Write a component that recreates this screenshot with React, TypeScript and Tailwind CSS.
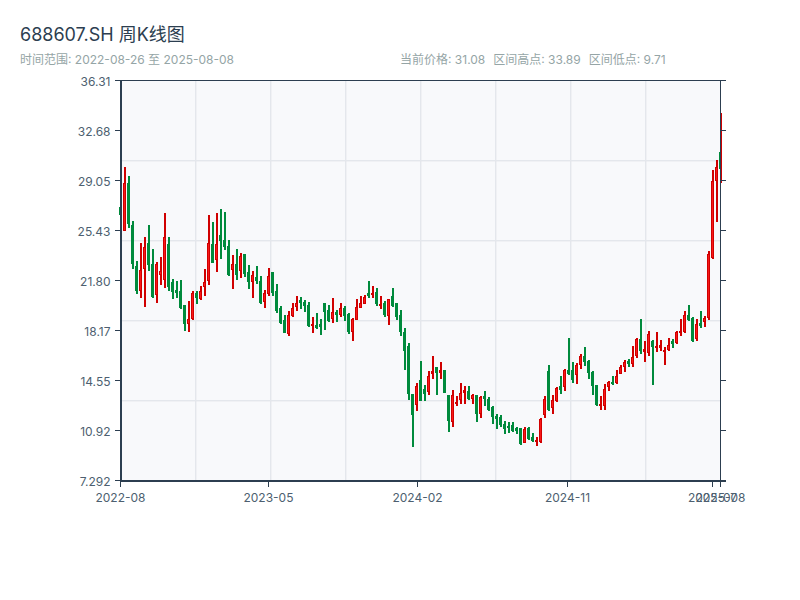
const C: [string, number, number, number, number][] = [
["g",207,215,207,215],["r",167,231,183,231],["g",176,228,183,224],["g",221,269,225,264],["g",261,294,266,291],
["r",243,298,270,291],["r",237,307,247,269],["g",225,271,243,265],["g",249,298,264,297],["r",262,303,264,295],
["r",257,285,271,275],["r",213,288,237,280],["g",237,291,244,287],["g",279,299,282,292],["g",281,298,290,293],
["g",280,309,291,308],["g",305,331,305,324],["r",301,332,319,324],["r",291,320,293,319],["g",291,304,293,298],
["r",286,300,291,299],["r",269,296,282,287],["r",215,285,243,281],["g",222,263,244,263],["r",213,272,244,260],
["g",209,259,235,241],["g",212,250,240,247],["g",240,276,246,275],["r",255,289,264,270],["g",249,280,264,275],
["r",253,278,256,271],["g",254,277,254,274],["g",265,289,272,282],["r",271,298,275,282],["g",266,284,277,281],
["g",276,304,281,303],["r",290,308,293,302],["r",268,296,276,294],["g",272,296,272,293],["g",284,313,291,311],
["g",306,324,308,323],["g",315,333,320,333],["r",311,336,315,334],["r",303,317,308,316],["r",296,311,303,307],
["g",297,309,300,303],["g",300,312,302,306],["g",302,327,305,326],["r",317,333,324,326],["g",313,329,325,328],
["g",319,335,324,327],["g",303,330,303,312],["g",305,322,310,321],["r",298,323,312,319],["g",310,322,312,315],
["r",303,317,308,315],["g",306,321,308,316],["g",313,334,314,332],["r",318,341,319,332],["r",299,320,307,320],
["r",296,308,303,308],["r",295,304,297,304],["g",281,298,293,296],["r",286,298,293,295],["g",288,306,292,304],
["r",296,309,304,306],["g",301,317,303,315],["r",299,325,299,316],["g",288,307,296,306],["g",303,320,303,317],
["g",310,336,315,332],["g",328,370,332,351],["g",343,400,346,394],["g",394,447,394,415],["r",383,411,386,405],
["g",361,401,380,401],["g",385,401,389,394],["r",371,395,376,392],["r",356,379,371,374],["g",367,395,367,373],
["r",362,379,370,373],["g",370,393,370,393],["g",395,432,395,421],["r",390,427,395,422],["r",396,406,402,404],
["r",383,404,393,400],["r",386,404,390,393],["g",386,400,391,399],["r",394,404,395,399],["g",395,422,395,414],
["r",396,418,397,414],["g",391,406,396,399],["g",397,411,399,410],["g",406,424,407,417],["g",414,429,416,419],
["g",415,427,417,425],["g",421,434,424,429],["g",422,433,426,428],["g",422,432,425,431],["g",427,434,428,431],
["g",428,445,428,444],["r",427,443,429,443],["g",427,440,428,439],["g",433,442,437,441],["r",437,446,440,442],
["r",418,443,419,442],["r",396,418,399,415],["g",365,411,371,410],["r",395,414,400,408],["r",387,402,388,401],
["g",376,394,386,390],["r",369,391,370,387],["g",338,375,370,374],["g",362,383,370,380],["r",363,384,365,375],
["r",354,369,356,365],["g",347,366,356,362],["g",360,379,361,373],["g",371,395,372,386],["g",385,406,385,405],
["r",396,410,404,406],["r",384,410,389,406],["r",381,391,382,387],["g",376,385,382,384],["r",370,384,376,383],
["r",365,374,367,374],["r",360,372,362,367],["g",359,367,361,364],["r",346,367,357,364],["r",338,358,339,356],
["g",319,354,339,351],["r",341,362,349,352],["r",331,356,334,353],["g",340,385,341,347],["r",332,352,346,348],
["r",340,351,345,348],["r",347,365,350,352],["r",338,351,345,350],["g",339,348,341,344],["r",331,344,332,343],
["r",319,336,331,333],["r",311,333,315,332],["g",305,321,315,320],["g",317,342,318,341],["r",319,341,324,339],
["g",311,328,323,326],["r",316,327,318,322],["r",251,320,254,318],["r",170,259,181,258],["r",160,222,167,181],
];
const RED = "#d00000";
const RED_FILL = "#f81818";
const GREEN = "#008a3c";
const AXIS = "#2c3e50";
const GRID = "#e4e7ec";
const LABEL = "#4d5f70";
const FONT = 'Inter, "Noto Sans CJK SC", sans-serif';

const yTicks = [
  [81, "36.31"], [131, "32.68"], [181, "29.05"], [231, "25.43"], [281, "21.80"],
  [331, "18.17"], [381, "14.55"], [431, "10.92"], [481, "7.292"],
] as const;
const xTicks = [
  [120.5, "2022-08"], [268.5, "2023-05"], [417.5, "2024-02"], [567.5, "2024-11"],
  [712.5, "2025-07"], [720.5, "2025-08"],
] as const;

function Candle({ d, i }: { d: (typeof C)[number]; i: number }) {
  const [k, wt, wb, bt, bb] = d;
  const x = 119 + 4 * i;
  const stroke = k === "r" ? RED : GREEN;
  return (
    <g>
      <rect x={x + 1} y={wt} width={2} height={wb - wt} fill={stroke} />
      <rect x={x} y={bt} width={3} height={Math.max(bb - bt, 1)} fill={stroke} />
      {k === "r" && bb - bt > 3 && (
        <rect x={x + 1} y={bt + 1} width={1} height={bb - bt - 2} fill={RED_FILL} />
      )}
    </g>
  );
}

export default function App() {
  return (
    <div className="w-[800px] h-[600px] bg-white flex flex-col" style={{ fontFamily: FONT }}>
      <div className="pt-[22px] px-5 h-[70px]">
        <h1 className="text-[18px] leading-[26px] text-[#2c3e50] font-normal">688607.SH 周K线图</h1>
        <div className="flex mt-[3px] text-[12px] leading-[18px] text-[#95a5a6]">
          <div className="w-[380px]">时间范围: 2022-08-26 至 2025-08-08</div>
          <div className="flex gap-[8px]">
            <span>当前价格: 31.08</span>
            <span>区间高点: 33.89</span>
            <span>区间低点: 9.71</span>
          </div>
        </div>
      </div>
      <svg width={800} height={530} viewBox="0 70 800 530" className="block">
        <rect x={121} y={81} width={599} height={400} fill="#f8f9fb" />
        {[195, 270, 345, 420, 495, 570, 645].map((x) => (
          <rect key={x} x={x} y={81} width={1.4} height={400} fill={GRID} />
        ))}
        {[160, 240, 320, 400].map((y) => (
          <rect key={y} x={121} y={y} width={599} height={1.4} fill={GRID} />
        ))}
        {C.map((d, i) => (
          <Candle key={i} d={d} i={i} />
        ))}
        <rect x={719} y={152} width={3} height={17} fill={GREEN} />
        <rect x={720} y={113} width={2} height={70} fill={RED} />
        <rect x={120} y={80} width={606} height={1} fill={AXIS} />
        <rect x={120} y={480} width={606} height={2} fill={AXIS} />
        <rect x={120} y={80} width={2} height={402} fill={AXIS} />
        <rect x={720} y={80} width={1} height={402} fill={AXIS} />
        {yTicks.map(([y, t]) => (
          <g key={t}>
            <rect x={115} y={y - 1} width={5} height={1} fill={AXIS} />
            <rect x={721} y={y - 1} width={5} height={1} fill={AXIS} />
            <text x={110.5} y={y + 5} textAnchor="end" fontSize={12} fill={LABEL}>{t}</text>
          </g>
        ))}
        {xTicks.map(([x, t]) => (
          <g key={t}>
            <rect x={x - 0.5} y={482} width={1} height={5} fill={AXIS} />
            <text x={x} y={502} textAnchor="middle" fontSize={12} fill={LABEL}>{t}</text>
          </g>
        ))}
      </svg>
    </div>
  );
}
